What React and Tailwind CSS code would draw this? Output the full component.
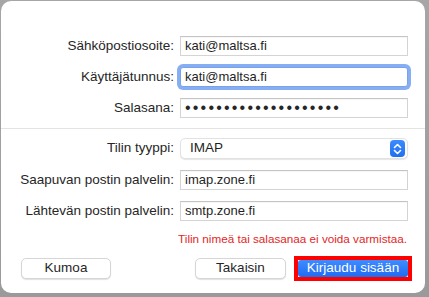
import React from "react";

const font = { fontFamily: '"Liberation Sans", Arial, sans-serif' };

function Label({ children }) {
  return (
    <div className="text-[13.5px] text-[#262626] text-right leading-[20px] whitespace-nowrap">
      {children}
    </div>
  );
}

function Field({ children, focused }) {
  if (focused) {
    return (
      <div className="h-[20px] rounded-[3px] ring-[3px] ring-[#86aef5] border border-[#7ba2e8] bg-white flex items-center pl-[4px] text-[13px] text-[#1f1f1f]">
        {children}
      </div>
    );
  }
  return (
    <div className="h-[20px] border border-[#d4d4d4] border-t-[#c4c4c4] bg-white flex items-center pl-[4px] text-[13px] text-[#1f1f1f] shadow-[inset_0_1px_0_rgba(0,0,0,0.03)]">
      {children}
    </div>
  );
}

function Stepper() {
  return (
    <div className="w-[15px] h-[17px] rounded-[4px] bg-gradient-to-b from-[#3d8bff] to-[#1f6ff0] flex items-center justify-center">
      <svg width="9" height="12" viewBox="0 0 9 12" fill="none" stroke="white" strokeWidth="1.6" strokeLinecap="round" strokeLinejoin="round">
        <path d="M1.5 4.5 L4.5 1.5 L7.5 4.5" />
        <path d="M1.5 7.5 L4.5 10.5 L7.5 7.5" />
      </svg>
    </div>
  );
}

function Button({ children, className = "" }) {
  return (
    <div className={"h-[21px] rounded-[5px] bg-white border border-[#d6d6d6] shadow-[0_1px_1px_rgba(0,0,0,0.12)] flex items-center justify-center text-[13.5px] text-[#262626] " + className}>
      {children}
    </div>
  );
}

export default function App() {
  return (
    <div className="w-[429px] h-[297px] bg-gradient-to-b from-[#a6a6a6] to-[#9a9a9a] pt-[1px] pl-[1px]" style={font}>
      <div className="w-[424px] h-[292px] bg-white rounded-[10px] flex flex-col">
        <div className="pt-[35px] grid grid-cols-[173px_228px] gap-x-[6px] gap-y-[11px]">
          <Label>Sähköpostiosoite:</Label>
          <Field>kati@maltsa.fi</Field>
          <Label>Käyttäjätunnus:</Label>
          <Field focused>kati@maltsa.fi</Field>
          <Label>Salasana:</Label>
          <Field>
            <span className="text-[16px] tracking-[2.2px] leading-none text-[#262626]">••••••••••••••••••••</span>
          </Field>
        </div>
        <div className="mt-[10px] h-px bg-[#e3e3e3]" />
        <div className="pt-[9px] grid grid-cols-[173px_228px] gap-x-[6px] gap-y-[11px]">
          <Label>Tilin tyyppi:</Label>
          <div className="h-[21px] rounded-[5px] bg-white border border-[#e2e2e2] shadow-[0_1px_1px_rgba(0,0,0,0.1)] flex items-center justify-between pl-[9px] pr-[2px] text-[13.5px] text-[#1f1f1f]">
            <span>IMAP</span>
            <Stepper />
          </div>
          <Label>Saapuvan postin palvelin:</Label>
          <Field>imap.zone.fi</Field>
          <Label>Lähtevän postin palvelin:</Label>
          <Field>smtp.zone.fi</Field>
        </div>
        <div className="mt-[11px] pr-[18px] text-right text-[11.7px] leading-[13px] text-[#e3261f]">
          Tilin nimeä tai salasanaa ei voida varmistaa.
        </div>
        <div className="mt-[11px] flex items-center pl-[20px] pr-[13px]">
          <Button className="w-[90px]">Kumoa</Button>
          <div className="flex-1" />
          <Button className="w-[91px]">Takaisin</Button>
          <div className="ml-[8px] border-[4px] border-[#ff0000] p-0">
            <div className="w-[110px] h-[17px] rounded-[3px] bg-gradient-to-b from-[#3f8cff] to-[#1e6cf2] flex items-center justify-center text-[13.5px] text-white">
              Kirjaudu sisään
            </div>
          </div>
        </div>
      </div>
    </div>
  );
}
